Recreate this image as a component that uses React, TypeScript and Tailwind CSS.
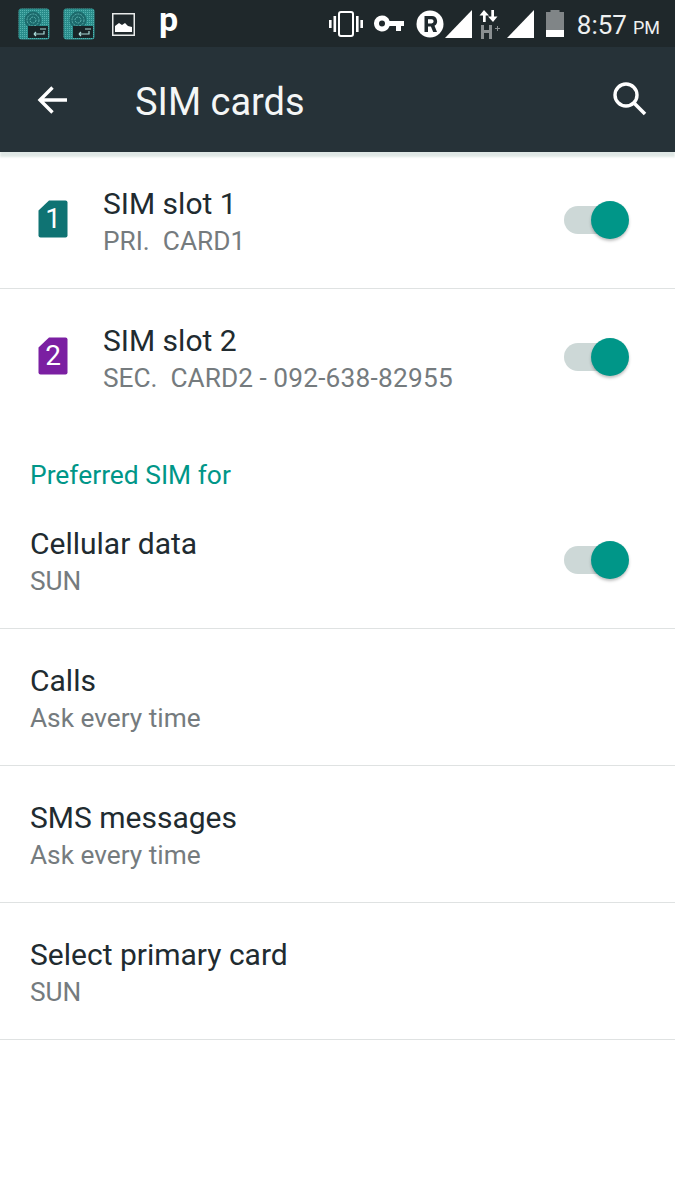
import React from "react";

const AppIcon = () => (
  <svg width="32" height="32" viewBox="0 0 32 32">
    <defs>
      <pattern id="dith" width="2" height="2" patternUnits="userSpaceOnUse">
        <rect width="2" height="2" fill="#2a8d8b" />
        <rect width="1" height="1" fill="#55b3b0" />
      </pattern>
    </defs>
    <rect x="0.5" y="0.5" width="31" height="31" rx="3" fill="url(#dith)" />
    <circle cx="15" cy="12" r="8.500" fill="#1c6a6c" />
    <circle cx="15" cy="12" r="6" fill="none" stroke="#5db3b0" strokeWidth="1" strokeDasharray="2 1" />
    <circle cx="15" cy="12" r="3" fill="none" stroke="#5db3b0" strokeWidth="1" strokeDasharray="2 1" />
    <rect x="10" y="18" width="20" height="12" fill="#182427" />
    <path d="M16 26h10v-3M16 26l2-2M16 26l2 2M22 21h6" stroke="#a9dad8" strokeWidth="1.200" fill="none" />
  </svg>
);

const ImageIcon = () => (
  <svg width="23" height="23" viewBox="0 0 23 23">
    <rect x="0.750" y="0.750" width="21.500" height="21.500" fill="none" stroke="#e8eaea" strokeWidth="1.500" />
    <path d="M3 19v-6l4-3 3 2 3-2 3 3 4 1v5z" fill="#fff" />
  </svg>
);

const Vibrate = () => (
  <svg width="34" height="26" viewBox="0 0 34 26">
    <rect x="10" y="1" width="14" height="24" rx="2" fill="none" stroke="#fff" strokeWidth="2" />
    <rect x="0" y="9" width="2.600" height="8" fill="#fff" />
    <rect x="4.500" y="5" width="2.600" height="16" fill="#fff" />
    <rect x="27" y="5" width="2.600" height="16" fill="#fff" />
    <rect x="31.400" y="9" width="2.600" height="8" fill="#fff" />
  </svg>
);

const Key = () => (
  <svg width="30" height="17" viewBox="0 0 30 17">
    <path fillRule="evenodd" d="M8 0.500a8 8 0 0 1 7.600 5.500H30v5h-3v5h-5v-5h-6.400A8 8 0 1 1 8 0.500zm0 5a3 3 0 1 0 0 6 3 3 0 0 0 0-6z" fill="#fff" />
  </svg>
);

const Roaming = () => (
  <svg width="28" height="28" viewBox="0 0 28 28">
    <circle cx="14" cy="14" r="13.500" fill="#fff" />
    <path fillRule="evenodd" d="M8.500 6h7.500a5.200 5.200 0 0 1 2.500 9.700L21 22h-3.800l-2.300-5.500H12V22H8.500zM12 9.200v4.200h3.500a2.100 2.100 0 0 0 0-4.200z" fill="#1f292d" />
  </svg>
);

const Signal = () => (
  <svg width="27" height="28" viewBox="0 0 27 28">
    <path d="M27 0v28H0z" fill="#fff" />
  </svg>
);

const DataH = () => (
  <svg width="22" height="30" viewBox="0 0 22 30">
    <path d="M6 1l5 5.500H7.700V13H5V6.500H1.500z" fill="#fff" />
    <path d="M15 13l-5-5.500h3.300V1H16v6.500h3.500z" fill="#fff" />
    <path d="M3 16h3v5h5v-5h3v14h-3v-6H6v6H3z" fill="#8a8f91" />
    <path d="M17 19h2v-2h1v2h2v1h-2v2h-1v-2h-2z" fill="#8a8f91" />
  </svg>
);

const Battery = () => (
  <svg width="18" height="27" viewBox="0 0 18 27">
    <path d="M4.500 0h9v2H18v25H0V2h4.500z" fill="#808587" />
    <rect x="0" y="20" width="18" height="7" fill="#fff" />
  </svg>
);

const SimIcon = ({ color, n }: { color: string; n: string }) => (
  <div className="relative flex h-[38px] w-[30px] items-center justify-center text-[28px] leading-none text-white">
    <svg className="absolute inset-0" width="30" height="38" viewBox="0 0 30 38">
      <path d="M11 0.500H27.500a2 2 0 0 1 2 2V35.500a2 2 0 0 1-2 2H2.500a2 2 0 0 1-2-2V10.500z" fill={color} />
    </svg>
    <span className="relative">{n}</span>
  </div>
);

const Toggle = () => (
  <div className="relative mr-[51px] h-[28px] w-[60px] shrink-0 rounded-full bg-[#cdd8d7]">
    <div className="absolute left-[27px] top-[-5px] h-[38px] w-[38px] rounded-full bg-[#009688] shadow-[0_2px_3px_rgba(0,0,0,0.25)]" />
  </div>
);

const Row = ({
  title,
  sub,
  toggle,
  icon,
  border = true,
}: {
  title: string;
  sub: React.ReactNode;
  toggle?: boolean;
  icon?: React.ReactNode;
  border?: boolean;
}) => (
  <div className={`flex h-[137px] items-center border-b ${border ? "border-[#dfe2e2]" : "border-transparent"}`}>
    {icon && <div className="ml-[38px] mr-[35px] mt-[-2px] flex w-[30px] shrink-0 justify-center">{icon}</div>}
    <div className={`flex min-w-0 flex-1 flex-col pt-[5px] ${icon ? "" : "pl-[30px]"}`}>
      <div className="text-[30px] leading-[38px] text-[#212b30]">{title}</div>
      <div className="whitespace-pre text-[26.250px] leading-[37px] text-[#757b7e]">{sub}</div>
    </div>
    {toggle && <Toggle />}
  </div>
);

export default function App() {
  return (
    <div className="h-[1200px] w-[675px] overflow-hidden bg-white font-['Roboto',sans-serif]">
      <div className="flex h-[47px] items-center bg-[#1f282b] text-white">
        <div className="ml-[18px]"><AppIcon /></div>
        <div className="ml-[13px]"><AppIcon /></div>
        <div className="ml-[17px] mt-[1px]"><ImageIcon /></div>
        <div className="ml-[24px] h-[38px] text-[34px] font-bold leading-[29px]">p</div>
        <div className="ml-auto flex items-center">
          <Vibrate />
          <div className="ml-[11px]"><Key /></div>
          <div className="ml-[12px]"><Roaming /></div>
          <div className="ml-[1px]"><Signal /></div>
          <div className="ml-[6px]"><DataH /></div>
          <div className="ml-[7px]"><Signal /></div>
          <div className="ml-[12px]"><Battery /></div>
          <div className="ml-[13px] mr-[15px] mt-[5px] flex items-baseline whitespace-nowrap">
            <span className="text-[26px] leading-[30px] text-[#eef0f0]">8:57</span>
            <span className="ml-[6px] text-[18px] leading-[30px] text-[#eef0f0]">PM</span>
          </div>
        </div>
      </div>
      <div className="relative flex h-[105px] items-center bg-[#263238] text-white shadow-[0_5px_2px_rgba(80,120,110,0.18)]">
        <svg className="ml-[37px]" width="31" height="30" viewBox="0 0 31 30">
          <path d="M30 15H3M15.500 2.500L3 15l12.500 12.500" fill="none" stroke="#fff" strokeWidth="3.400" />
        </svg>
        <div className="ml-[67px] mt-[4px] text-[38px] leading-none text-[#f4f6f6]">SIM cards</div>
        <svg className="ml-auto mb-[3px] mr-[28px]" width="35" height="35" viewBox="0 0 35 35">
          <circle cx="14" cy="14" r="11" fill="none" stroke="#fff" strokeWidth="3.400" />
          <path d="M22 22l11 11" stroke="#fff" strokeWidth="3.600" />
        </svg>
      </div>
      <Row title="SIM slot 1" sub="PRI.  CARD1" toggle icon={<SimIcon color="#0f7373" n="1" />} />
      <Row
        title="SIM slot 2"
        sub={<>SEC.  CARD2 - <span className="tracking-[0.23px]">092-638-82955</span></>}
        toggle
        border={false}
        icon={<SimIcon color="#7b1fa2" n="2" />}
      />
      <div className="flex h-[66px] items-center pl-[30px] pt-[32px] text-[26.400px] leading-none text-[#009688]">Preferred SIM for</div>
      <Row title="Cellular data" sub="SUN" toggle />
      <Row title="Calls" sub="Ask every time" />
      <Row title="SMS messages" sub="Ask every time" />
      <Row title="Select primary card" sub="SUN" />
    </div>
  );
}
